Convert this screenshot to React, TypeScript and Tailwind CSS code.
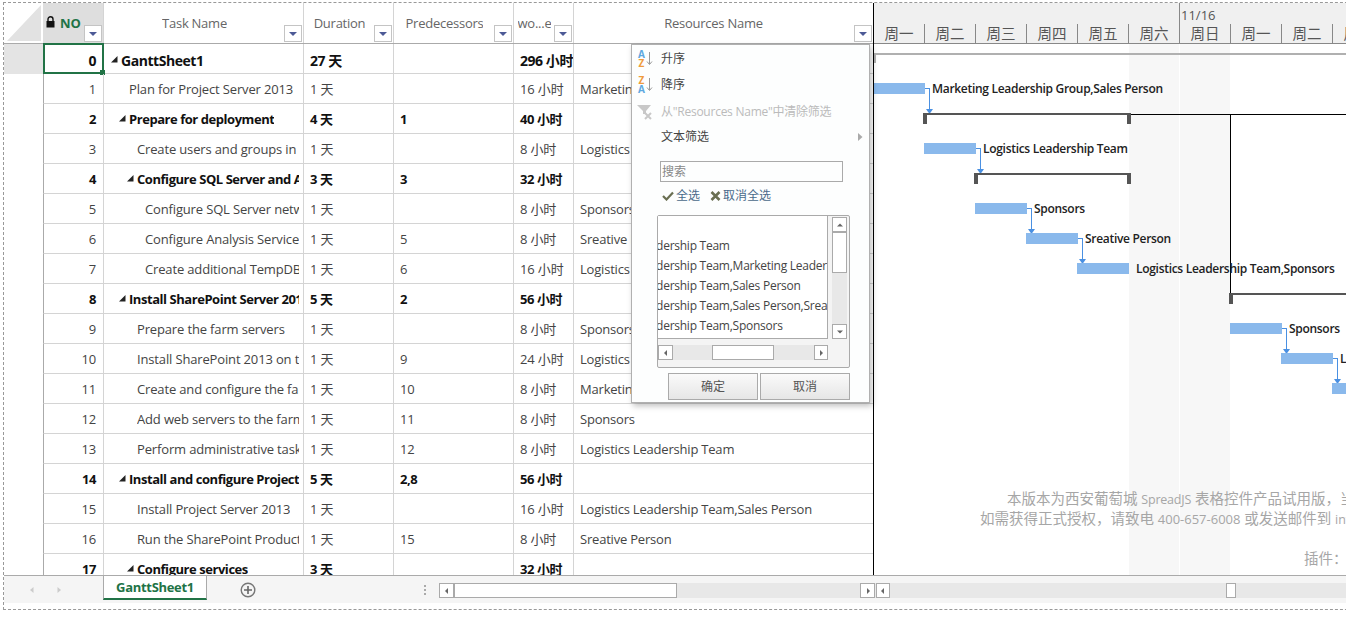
import React from 'react';
import { clsx } from 'clsx';

const font = '[font-family:"Open_Sans","Noto_Sans_CJK_SC",sans-serif]';

interface Row {
  no: number;
  name: string;
  level: number;
  summary?: boolean;
  dur: string;
  pred?: string;
  work: string;
  res?: string;
}

const rows: Row[] = [
  { no: 0, name: 'GanttSheet1', level: 0, summary: true, dur: '27 天', work: '296 小时' },
  { no: 1, name: 'Plan for Project Server 2013', level: 1, dur: '1 天', work: '16 小时', res: 'Marketing Leadership Group,Sales Person' },
  { no: 2, name: 'Prepare for deployment', level: 1, summary: true, dur: '4 天', pred: '1', work: '40 小时' },
  { no: 3, name: 'Create users and groups in', level: 2, dur: '1 天', work: '8 小时', res: 'Logistics Leadership Team' },
  { no: 4, name: 'Configure SQL Server and Analysis', level: 2, summary: true, dur: '3 天', pred: '3', work: '32 小时' },
  { no: 5, name: 'Configure SQL Server network', level: 3, dur: '1 天', work: '8 小时', res: 'Sponsors' },
  { no: 6, name: 'Configure Analysis Services', level: 3, dur: '1 天', pred: '5', work: '8 小时', res: 'Sreative Person' },
  { no: 7, name: 'Create additional TempDB', level: 3, dur: '1 天', pred: '6', work: '16 小时', res: 'Logistics Leadership Team,Sponsors' },
  { no: 8, name: 'Install SharePoint Server 2013', level: 1, summary: true, dur: '5 天', pred: '2', work: '56 小时' },
  { no: 9, name: 'Prepare the farm servers', level: 2, dur: '1 天', work: '8 小时', res: 'Sponsors' },
  { no: 10, name: 'Install SharePoint 2013 on the', level: 2, dur: '1 天', pred: '9', work: '24 小时', res: 'Logistics Leadership Team' },
  { no: 11, name: 'Create and configure the farm', level: 2, dur: '1 天', pred: '10', work: '8 小时', res: 'Marketing Leadership Group' },
  { no: 12, name: 'Add web servers to the farm', level: 2, dur: '1 天', pred: '11', work: '8 小时', res: 'Sponsors' },
  { no: 13, name: 'Perform administrative tasks', level: 2, dur: '1 天', pred: '12', work: '8 小时', res: 'Logistics Leadership Team' },
  { no: 14, name: 'Install and configure Project Server', level: 1, summary: true, dur: '5 天', pred: '2,8', work: '56 小时' },
  { no: 15, name: 'Install Project Server 2013', level: 2, dur: '1 天', work: '16 小时', res: 'Logistics Leadership Team,Sales Person' },
  { no: 16, name: 'Run the SharePoint Products', level: 2, dur: '1 天', pred: '15', work: '8 小时', res: 'Sreative Person' },
  { no: 17, name: 'Configure services', level: 2, summary: true, dur: '3 天', work: '32 小时' },
];

const levelPad = ['pl-[7px]', 'pl-[15px]', 'pl-[23px]', 'pl-[31px]'];
const days = ['周一', '周二', '周三', '周四', '周五', '周六', '周日', '周一', '周二', '周三'];

const FilterButton = () => (
  <div className="absolute right-[1px] bottom-[1px] flex h-[17px] w-[18px] items-center justify-center border border-[#c4c4c4] bg-white">
    <svg width="10" height="6" viewBox="0 0 10 6">
      <path d="M1 1h8L5 5z" fill="#4d5a96" />
    </svg>
  </div>
);

const HeaderCell = ({ w, label }: { w: string; label: string }) => (
  <div className={clsx('relative flex shrink-0 justify-center border-r border-[#d4d4d4] pt-[11px] pr-[18px] text-[13px] leading-[18px] tracking-[-0.25px] text-[#666]', w)}>
    <span className="overflow-hidden whitespace-nowrap">{label}</span>
    <FilterButton />
  </div>
);

const Tri = ({ className }: { className: string }) => (
  <svg width="7" height="7" viewBox="0 0 7 7" className={clsx('mr-[3px] shrink-0', className)}>
    <path d="M0 6.5h6.5V0z" fill="#222" />
  </svg>
);

const ScrollBtn = ({ dir, className }: { dir: 'l' | 'r' | 'u' | 'd'; className?: string }) => {
  const d = { l: 'M5 1v6L2 4z', r: 'M3 1v6l3-3z', u: 'M1 5.5h6l-3-3z', d: 'M1 2.5h6l-3 3z' }[dir];
  return (
    <div className={clsx('flex shrink-0 items-center justify-center border border-[#aaa] bg-white', className)}>
      <svg width="8" height="8" viewBox="0 0 8 8">
        <path d={d} fill="#666" />
      </svg>
    </div>
  );
};

const SortIcon = ({ top, bottom, topColor, bottomColor }: { top: string; bottom: string; topColor: string; bottomColor: string }) => (
  <div className="flex w-[16px] shrink-0 items-center">
    <div className="flex w-[9px] flex-col text-center text-[10px] leading-[9px] font-bold">
      <span className={topColor}>{top}</span>
      <span className={bottomColor}>{bottom}</span>
    </div>
    <svg width="7" height="16" viewBox="0 0 7 16">
      <path d="M3.5 1v12M1 10.5l2.5 3 2.5-3" stroke="#999" fill="none" />
    </svg>
  </div>
);

const GridRow = ({ r }: { r: Row }) => {
  const selected = r.no === 0;
  return (
    <div
      className={clsx(
        'flex h-[30px] shrink-0 text-[13px]',
        selected ? 'text-[14px] leading-[33px]' : 'leading-[31px]',
        r.summary ? 'font-bold tracking-[-0.45px] text-[#111]' : 'tracking-[-0.15px] text-[#444]',
      )}
    >
      <div className={clsx('w-[39px] shrink-0', selected ? 'bg-[#e4e4e4]' : 'bg-white')} />
      <div className="relative w-[61px] shrink-0 border-r border-b border-l border-r-[#d4d4d4] border-b-[#d4d4d4] border-l-[#aaa] pr-[7px] text-right">
        {r.no}
        {selected && (
          <div className="absolute top-[-1px] right-[-1px] bottom-[-1px] left-[-1px] border-2 border-[#217346]">
            <div className="absolute right-[-3px] bottom-[-3px] h-[5px] w-[5px] bg-[#217346]" />
          </div>
        )}
      </div>
      <div className={clsx('flex w-[200px] shrink-0 items-start border-r border-b border-[#d4d4d4] pr-[4px]', levelPad[r.level])}>
        {r.summary ? <Tri className={selected ? 'mt-[12px]' : 'mt-[11px]'} /> : <span className="w-[10px] shrink-0" />}
        <span className="overflow-hidden whitespace-nowrap">{r.name}</span>
      </div>
      <div className="w-[90px] shrink-0 border-r border-b border-[#d4d4d4] pl-[6px]">{r.dur}</div>
      <div className="w-[120px] shrink-0 border-r border-b border-[#d4d4d4] pl-[6px]">{r.pred}</div>
      <div className="w-[60px] shrink-0 overflow-hidden border-r border-b border-[#d4d4d4] pl-[6px] whitespace-nowrap">{r.work}</div>
      <div className="w-[299px] shrink-0 border-b border-[#d4d4d4] pl-[6px] tracking-[-0.2px] whitespace-nowrap">{r.res}</div>
    </div>
  );
};

const Bar = ({ x, y, w, label, labelX }: { x: string; y: string; w: string; label?: string; labelX?: string }) => (
  <>
    <div className={clsx('absolute h-[11px] bg-[#8ab9ec]', x, y, w)} />
    {label && (
      <span className={clsx('absolute text-[12px] leading-[12px] font-semibold tracking-[-0.3px] whitespace-nowrap text-[#222]', labelX, y)}>{label}</span>
    )}
  </>
);

const Summary = ({ x, y, w }: { x: string; y: string; w: string }) => (
  <div className={clsx('absolute flex h-[11px] justify-between border-t-2 border-[#555]', x, y, w)}>
    <div className="h-[9px] w-[4px] bg-[#555]" />
    <div className="h-[9px] w-[4px] bg-[#555]" />
  </div>
);

const Link = ({ x, y, h }: { x: string; y: string; h: string }) => (
  <div className={clsx('absolute w-[5px] border-t border-r border-[#4a90e2]', x, y, h)}>
    <svg width="7" height="5" viewBox="0 0 7 5" className="absolute right-[-4px] bottom-[-2px]">
      <path d="M0 0h7L3.5 5z" fill="#4a90e2" />
    </svg>
  </div>
);

const Gantt = () => (
  <div className="flex w-[473px] shrink-0 flex-col overflow-hidden border-l border-black">
    <div className="h-[41px] shrink-0 border-b border-[#888] bg-[#f0f0f0]">
      <div className="flex h-[21px]">
        <div className="w-[306px] shrink-0 border-r border-[#888]" />
        <span className="pl-[1px] text-[13px] leading-[24px] text-[#555]">11/16</span>
      </div>
      <div className="flex h-[19px]">
        {days.map((d, i) => (
          <div key={i} className="w-[51px] shrink-0 border-r border-[#888] text-center text-[14.5px] leading-[20px] text-[#555]">
            {d}
          </div>
        ))}
      </div>
    </div>
    {/* chart canvas, coordinates are relative to the first day */}
    <div className="relative flex-1 bg-white">
      <div className="absolute top-0 bottom-0 left-[255px] flex w-[101px]">
        <div className="w-[50px] bg-[#f7f7f7]" />
        <div className="w-[1px] bg-white" />
        <div className="w-[50px] bg-[#f7f7f7]" />
      </div>
      <div className="absolute top-[9px] left-0 h-[2px] w-[473px] bg-[#b0b0b0]" />
      <div className="absolute top-[9px] left-0 h-[10px] w-[2px] bg-[#b0b0b0]" />

      <div className="absolute top-[70px] left-[250px] h-[1px] w-[223px] bg-black" />
      <div className="absolute top-[70px] left-[356px] h-[180px] w-[1px] bg-black" />

      <Bar x="left-0" y="top-[39px]" w="w-[51px]" label="Marketing Leadership Group,Sales Person" labelX="left-[58px]" />
      <Link x="left-[51px]" y="top-[44px]" h="h-[24px]" />
      <Summary x="left-[49px]" y="top-[69px]" w="w-[208px]" />
      <Bar x="left-[50px]" y="top-[99px]" w="w-[52px]" label="Logistics Leadership Team" labelX="left-[109px]" />
      <Link x="left-[102px]" y="top-[104px]" h="h-[24px]" />
      <Summary x="left-[100px]" y="top-[129px]" w="w-[157px]" />
      <Bar x="left-[101px]" y="top-[159px]" w="w-[52px]" label="Sponsors" labelX="left-[160px]" />
      <Link x="left-[153px]" y="top-[164px]" h="h-[24px]" />
      <Bar x="left-[152px]" y="top-[189px]" w="w-[52px]" label="Sreative Person" labelX="left-[211px]" />
      <Link x="left-[204px]" y="top-[194px]" h="h-[24px]" />
      <Bar x="left-[203px]" y="top-[219px]" w="w-[52px]" label="Logistics Leadership Team,Sponsors" labelX="left-[262px]" />
      <Summary x="left-[355px]" y="top-[249px]" w="w-[300px]" />
      <Bar x="left-[356px]" y="top-[279px]" w="w-[52px]" label="Sponsors" labelX="left-[415px]" />
      <Link x="left-[408px]" y="top-[284px]" h="h-[24px]" />
      <Bar x="left-[407px]" y="top-[309px]" w="w-[52px]" label="Logistics Leadership Team" labelX="left-[466px]" />
      <Link x="left-[459px]" y="top-[314px]" h="h-[24px]" />
      <Bar x="left-[458px]" y="top-[339px]" w="w-[52px]" />

      <div className="absolute top-[445px] left-[133px] text-[14.5px] leading-[20px] whitespace-nowrap text-[#a6a6a6]">
        本版本为西安葡萄城 <span className="text-[12.5px] tracking-[-0.2px]">SpreadJS</span> 表格控件产品试用版，当前试用期剩余
      </div>
      <div className="absolute top-[465px] left-[106px] text-[14.5px] leading-[20px] whitespace-nowrap text-[#a6a6a6]">
        如需获得正式授权，请致电 <span className="text-[13px]">400-657-6008</span> 或发送邮件到 <span className="text-[12.5px]">info.xa@grapecity.com</span>
      </div>
      <div className="absolute top-[505px] left-[430px] text-[14.5px] leading-[20px] whitespace-nowrap text-[#a6a6a6]">插件：</div>
    </div>
  </div>
);

const FilterMenu = () => (
  <div className="absolute top-[41px] left-[627px] h-[359px] w-[239px] border border-[#b0b0b0] bg-[#fdfefe] pt-[1px] text-[12px] text-[#444] shadow-[2px_3px_6px_rgba(0,0,0,0.25)]">
    <div className="flex h-[26px] items-center pl-[5px]">
      <SortIcon top="A" bottom="Z" topColor="text-[#5ea8e0]" bottomColor="text-[#ef9b3c]" />
      <span className="pl-[8px]">升序</span>
    </div>
    <div className="flex h-[26px] items-center pl-[5px]">
      <SortIcon top="Z" bottom="A" topColor="text-[#ef9b3c]" bottomColor="text-[#5ea8e0]" />
      <span className="pl-[8px]">降序</span>
    </div>
    <div className="flex h-[27px] items-center pl-[5px] text-[#bbb]">
      <svg width="16" height="16" viewBox="0 0 16 16" className="shrink-0">
        <path d="M0 1h14L9 7v3H6V7z" fill="#c8c8c8" />
        <path d="M8 9l6 6M14 9l-6 6" stroke="#c8c8c8" strokeWidth="2" />
      </svg>
      <span className="pl-[8px] tracking-[-0.25px]">从"Resources Name"中清除筛选</span>
    </div>
    <div className="flex h-[24px] items-center justify-between pr-[6px] pl-[29px]">
      <span>文本筛选</span>
      <svg width="5" height="8" viewBox="0 0 5 8">
        <path d="M0 0l4.5 4L0 8z" fill="#aaa" />
      </svg>
    </div>
    <div className="mt-[12px] ml-[28px] h-[21px] w-[183px] border border-[#aaa] pl-[1px] text-[12px] leading-[19px] text-[#888]">搜索</div>
    <div className="mt-[4px] ml-[30px] flex h-[20px] items-center text-[#4a6a8a]">
      <svg width="12" height="10" viewBox="0 0 12 10">
        <path d="M1 5l3.5 3.5L11 1.5" stroke="#6a6f52" strokeWidth="2.2" fill="none" />
      </svg>
      <span className="pl-[2px]">全选</span>
      <svg width="11" height="10" viewBox="0 0 11 10" className="ml-[10px]">
        <path d="M1.5 1l8 8M9.5 1l-8 8" stroke="#6a6f52" strokeWidth="2.6" />
      </svg>
      <span className="pl-[2px]">取消全选</span>
    </div>
    <div className="mt-[9px] ml-[25px] flex h-[153px] w-[193px] flex-col rounded-[2px] border border-[#aaa] bg-[#f4f4f4]">
      <div className="flex h-[123px] shrink-0">
        <div className="w-[170px] shrink-0 overflow-hidden border-r border-b border-[#aaa] bg-white pt-[20px] leading-[20px] tracking-[-0.25px] whitespace-nowrap text-[#444]">
          <div className="-ml-[69px]">Logistics Leadership Team</div>
          <div className="-ml-[69px]">Logistics Leadership Team,Marketing Leadership Group</div>
          <div className="-ml-[69px]">Logistics Leadership Team,Sales Person</div>
          <div className="-ml-[69px]">Logistics Leadership Team,Sales Person,Sreative Person</div>
          <div className="-ml-[69px]">Logistics Leadership Team,Sponsors</div>
        </div>
        <div className="mt-[1px] ml-[4px] flex w-[15px] flex-col bg-[#e8e8e8]">
          <ScrollBtn dir="u" className="h-[15px]" />
          <div className="h-[41px] border border-[#aaa] bg-white" />
          <div className="flex-1" />
          <ScrollBtn dir="d" className="h-[15px]" />
        </div>
      </div>
      <div className="mt-[6px] flex h-[15px] w-[170px] bg-[#e8e8e8]">
        <ScrollBtn dir="l" className="w-[15px]" />
        <div className="ml-[39px] w-[62px] border border-[#aaa] bg-white" />
        <div className="flex-1" />
        <ScrollBtn dir="r" className="w-[14px]" />
      </div>
    </div>
    <div className="mt-[5px] ml-[36px] flex gap-[2px]">
      <div className="h-[27px] w-[90px] border border-[#aaa] bg-[linear-gradient(#fafafa,#e6e6e6)] text-center leading-[26px] text-[#555]">确定</div>
      <div className="h-[27px] w-[90px] border border-[#aaa] bg-[linear-gradient(#fafafa,#e6e6e6)] text-center leading-[26px] text-[#555]">取消</div>
    </div>
  </div>
);

const TabStrip = () => (
  <div className="flex h-[27px] shrink-0 bg-[#f5f5f5]">
    <div className="flex w-[99px] shrink-0 items-center gap-[19px] pl-[24px]">
      <svg width="8" height="8" viewBox="0 0 8 8"><path d="M5.5 1v6L2 4z" fill="#ccc" /></svg>
      <svg width="8" height="8" viewBox="0 0 8 8"><path d="M2.5 1v6L6 4z" fill="#ccc" /></svg>
    </div>
    <div className="-mt-[1px] h-[25px] w-[104px] shrink-0 border-r border-l border-[#aaa] border-b-2 border-b-[#217346] bg-white text-center text-[13px] leading-[24px] font-bold tracking-[-0.3px] text-[#217346]">
      GanttSheet1
    </div>
    <div className="ml-[33px] flex w-[16px] shrink-0 items-center">
      <svg width="16" height="16" viewBox="0 0 16 16">
        <circle cx="8" cy="8" r="6.8" stroke="#777" strokeWidth="1.4" fill="none" />
        <path d="M8 4v8M4 8h8" stroke="#666" strokeWidth="1.6" />
      </svg>
    </div>
    <div className="ml-[162px] flex w-[14px] shrink-0 flex-col items-center justify-center gap-[2px]">
      <div className="h-[2px] w-[2px] bg-[#aaa]" />
      <div className="h-[2px] w-[2px] bg-[#aaa]" />
      <div className="h-[2px] w-[2px] bg-[#aaa]" />
    </div>
    <div className="mt-[7px] ml-[7px] flex h-[15px] w-[436px] shrink-0 bg-[#e8e8e8]">
      <ScrollBtn dir="l" className="w-[15px]" />
      <div className="w-[223px] border border-[#aaa] bg-white" />
      <div className="flex-1" />
      <ScrollBtn dir="r" className="w-[15px]" />
    </div>
    <div className="mt-[7px] flex h-[15px] flex-1 bg-[#e8e8e8]">
      <ScrollBtn dir="l" className="ml-[1px] w-[14px]" />
      <div className="ml-[336px] w-[10px] border border-[#aaa] bg-white" />
    </div>
  </div>
);

export default function App() {
  return (
    <div className={clsx('h-[619px] w-[1346px] overflow-hidden bg-white pt-[2px] pl-[3px]', font)}>
      <div className="flex h-[608px] w-[1380px] flex-col border border-dashed border-[#999]">
        <div className="relative flex h-[573px] shrink-0 border-b border-[#aaa]">
          <div className="flex w-[869px] shrink-0 flex-col overflow-hidden">
            <div className="flex h-[41px] shrink-0 border-b border-[#aaa]">
              <div className="w-[39px] shrink-0 pt-[2px] pr-[2px] pb-[2px] pl-[3px]">
                <div className="h-full w-full bg-[#e2e2e2] [clip-path:polygon(0_100%,100%_0,100%_100%)]" />
              </div>
              <div className="relative flex w-[61px] shrink-0 items-start gap-[5px] border-r border-[#d4d4d4] bg-[#dedede] pt-[11px] pl-[3px]">
                <svg width="9" height="12" viewBox="0 0 9 12" className="mt-[2px]">
                  <path d="M2 5V3.2a2.5 2.5 0 0 1 5 0V5" stroke="#111" strokeWidth="1.4" fill="none" />
                  <rect x="0.5" y="5" width="8" height="6.5" fill="#111" />
                </svg>
                <span className="text-[13px] leading-[18px] font-bold text-[#217346]">NO</span>
                <FilterButton />
              </div>
              <HeaderCell w="w-[200px]" label="Task Name" />
              <HeaderCell w="w-[90px]" label="Duration" />
              <HeaderCell w="w-[120px]" label="Predecessors" />
              <HeaderCell w="w-[60px]" label="wo...e" />
              <div className="relative flex w-[299px] shrink-0 justify-center pt-[11px] pr-[20px] text-[13px] leading-[18px] tracking-[-0.25px] text-[#666]">
                Resources Name
                <FilterButton />
              </div>
            </div>
            {rows.map((r) => (
              <GridRow key={r.no} r={r} />
            ))}
          </div>
          <Gantt />
          <FilterMenu />
        </div>
        <TabStrip />
      </div>
    </div>
  );
}
